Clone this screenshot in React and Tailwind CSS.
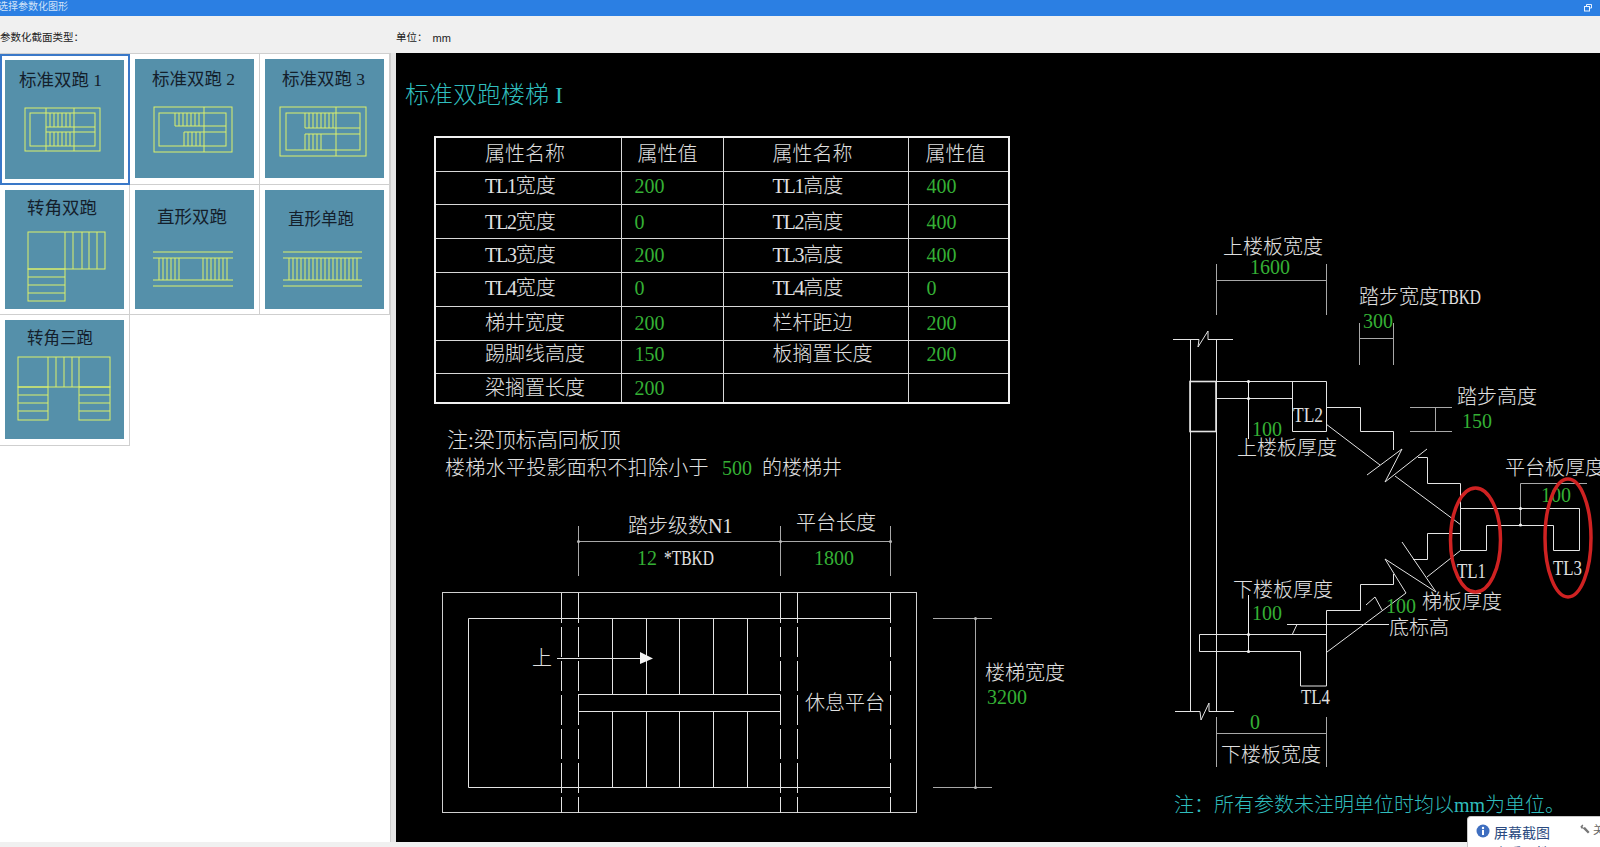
const cad = { fontFamily: '"Liberation Serif", "Noto Sans CJK SC", serif' };
const ui = { fontFamily: '"Liberation Sans", "Noto Sans CJK SC", sans-serif' };

const WHITE = "#e0e0e0";
const GREEN = "#35b035";
const CYAN = "#2fbdbd";
const YELLOW = "#dcf06a";

// evenly spaced stair treads inside a thumbnail
function Treads({ from, to, step, y1, y2 }) {
  const xs = [];
  for (let x = from; x <= to; x += step) xs.push(x);
  return xs.map((x) => <line key={x} x1={x} x2={x} y1={y1} y2={y2} />);
}

function Rungs({ x1, x2, ys }) {
  return ys.map((y) => <line key={y} x1={x1} x2={x2} y1={y} y2={y} />);
}

function Ladder({ xs, y1, y2 }) {
  return xs.map((x) => <line key={x} x1={x} x2={x} y1={y1} y2={y2} />);
}

const thumbs = [
  {
    title: "标准双跑 1", x: 14, y: 26, selected: true,
    art: (
      <>
        <rect x="20" y="48" width="75" height="43" />
        <rect x="25" y="53" width="65" height="33" />
        <Ladder xs={[41, 69]} y1={48} y2={91} />
        <Rungs x1={41} x2={90} ys={[67, 72]} />
        <Treads from={45} to={65} step={4} y1={53} y2={67} />
        <Treads from={45} to={65} step={4} y1={72} y2={86} />
      </>
    ),
  },
  {
    title: "标准双跑 2", x: 17, y: 26,
    art: (
      <>
        <rect x="19" y="48" width="78" height="45" />
        <rect x="24" y="54" width="67" height="33" />
        <line x1="69" x2="69" y1="48" y2="93" />
        <path d="M40 54V67H91M49 87V73H91" />
        <Treads from={44} to={65} step={4} y1={54} y2={67} />
        <Treads from={53} to={65} step={4} y1={73} y2={87} />
      </>
    ),
  },
  {
    title: "标准双跑 3", x: 17, y: 26,
    art: (
      <>
        <rect x="15" y="48" width="86" height="49" />
        <rect x="21" y="54" width="74" height="37" />
        <line x1="71" x2="71" y1="48" y2="97" />
        <path d="M40 54V69H95M40 91V75H95" />
        <Treads from={44} to={68} step={4} y1={54} y2={69} />
        <Treads from={44} to={59} step={4} y1={75} y2={91} />
      </>
    ),
  },
  {
    title: "转角双跑", x: 22, y: 24,
    art: (
      <>
        <rect x="23" y="42" width="77" height="37" />
        <rect x="23" y="79" width="37" height="32" />
        <Ladder xs={[60, 68, 77, 84, 92]} y1={42} y2={79} />
        <Rungs x1={23} x2={60} ys={[87, 95, 103]} />
      </>
    ),
  },
  {
    title: "直形双跑", x: 22, y: 33,
    art: (
      <>
        <Rungs x1={18} x2={98} ys={[62, 68, 90, 96]} />
        <Treads from={24} to={47} step={4} y1={68} y2={90} />
        <Treads from={68} to={93} step={4} y1={68} y2={90} />
      </>
    ),
  },
  {
    title: "直形单跑", x: 23, y: 35, size: 16.5,
    art: (
      <>
        <Rungs x1={18} x2={97} ys={[62, 68, 90, 96]} />
        <Treads from={24} to={92} step={4} y1={68} y2={90} />
      </>
    ),
  },
  {
    title: "转角三跑", x: 22, y: 24, size: 16.5,
    art: (
      <>
        <rect x="13" y="37" width="92" height="30" />
        <rect x="13" y="67" width="30" height="33" />
        <rect x="74" y="67" width="31" height="33" />
        <Ladder xs={[43, 51, 59, 67, 74]} y1={37} y2={67} />
        <Rungs x1={13} x2={43} ys={[75, 83, 91]} />
        <Rungs x1={74} x2={105} ys={[75, 83, 91]} />
      </>
    ),
  },
];

function Thumb({ item }) {
  return (
    <div className={item.selected ? "flex items-center justify-start border-2 border-[#3a78c8] pl-[3px]" : "flex items-center justify-center border-r border-b border-[#cfcfcf]"}>
      <svg viewBox="0 0 119 119" className="h-[119px] w-[119px] bg-[#5590aa]">
        <text x={item.x} y={item.y} fontSize={item.size || 17.5} fill="#14202c" style={cad}>{item.title}</text>
        <g fill="none" stroke={YELLOW} strokeWidth="1">{item.art}</g>
      </svg>
    </div>
  );
}

// last entry nudges the row's text, the labels don't sit centred in the drawing
const rows = [
  ["h-[34px]", "属性名称", "属性值", "属性名称", "属性值", ""],
  ["h-[33px]", "TL1|宽度", "200", "TL1|高度", "400", "pb-[4px]"],
  ["h-[34px]", "TL2|宽度", "0", "TL2|高度", "400", "pt-[2px]"],
  ["h-[34px]", "TL3|宽度", "200", "TL3|高度", "400", ""],
  ["h-[34px]", "TL4|宽度", "0", "TL4|高度", "0", "pb-[2px]"],
  ["h-[34px]", "梯井宽度", "200", "栏杆距边", "200", "pb-[1px]"],
  ["h-[33px]", "踢脚线高度", "150", "板搁置长度", "200", "pb-[5px]"],
  ["h-[30px]", "梁搁置长度", "200", "", "", ""],
];

// TL labels are drawn narrower than the chinese that follows them
function Name({ text }) {
  const [a, b] = text.split("|");
  if (!b) return text;
  return (
    <>
      <span className="tracking-[-1.2px]">{a}</span>
      {b}
    </>
  );
}

function ParamTable() {
  return (
    <table className="ml-[38px] mt-[25px] w-[574px] table-fixed border-collapse border-2 border-[#f0f0f0] text-[20px] leading-none text-[#e0e0e0]">
      <colgroup>
        <col className="w-[186px]" />
        <col className="w-[102px]" />
        <col className="w-[185px]" />
        <col className="w-[101px]" />
      </colgroup>
      <tbody>
        {rows.map((r, i) => {
          const head = i === 0;
          return (
            <tr key={i} className={r[0]}>
              <td className={`border border-[#d8d8d8] pl-[49px] ${r[5]}`}><Name text={r[1]} /></td>
              <td className={`${head ? "border border-[#d8d8d8] pl-[16px]" : "border border-[#d8d8d8] pl-[13px] text-[#35b035]"} ${r[5]}`}>{r[2]}</td>
              <td className={`border border-[#d8d8d8] pl-[49px] ${r[5]}`}><Name text={r[3]} /></td>
              <td className={`${head ? "border border-[#d8d8d8] pl-[17px]" : "border border-[#d8d8d8] pl-[18px] text-[#35b035]"} ${r[5]}`}>{r[4]}</td>
            </tr>
          );
        })}
      </tbody>
    </table>
  );
}

function T({ x, y, c = WHITE, size = 20, len, children }) {
  return (
    <text x={x} y={y} fontSize={size} fill={c} style={cad} dominantBaseline="central" textLength={len} lengthAdjust={len ? "spacingAndGlyphs" : undefined}>
      {children}
    </text>
  );
}

function PlanDrawing() {
  return (
    <svg viewBox="396 500 704 330" className="mt-[19px] h-[330px] w-[704px]">
      <g fill="none" stroke="#e4e4e4" strokeWidth="1">
        <rect x="442.5" y="592.5" width="474" height="220" stroke="#cfcfcf" />
        <path d="M890.5 618.5H468.5V787.5H890.5" />
        <path d="M578 694.5H780.5M578 711.5H780.5" />
        <path d="M612.5 618V694M646.5 618V694M679.5 618V694M713.5 618V694M747.5 618V694" />
        <path d="M612.5 711V787M646.5 711V787M679.5 711V787M713.5 711V787M747.5 711V787" />
        <path d="M561.5 593V813M578.5 593V813M780.5 593V813M797.5 593V813M890.5 593V813" strokeDasharray="30 4" />
        <path d="M557 658.5H642" />
      </g>
      <path d="M640 652L653 658.5L640 664Z" fill="#f2f2f2" />
      <g fill="none" stroke="#a8a8a8" strokeWidth="1">
        <path d="M578.5 526V576M780.5 526V576M890.5 526V576M578 541.5H891" />
        <path d="M933 618.5H992M933 787.5H992M975.5 618V787" />
      </g>
      <g fill="#b8b8b8">
        <circle cx="578.5" cy="541.5" r="1.5" />
        <circle cx="780.5" cy="541.5" r="1.5" />
        <circle cx="890.5" cy="541.5" r="1.5" />
        <circle cx="975.5" cy="618.5" r="1.5" />
        <circle cx="975.5" cy="787.5" r="1.5" />
      </g>
      <T x={628} y={526}>踏步级数N1</T>
      <T x={796} y={523}>平台长度</T>
      <T x={637} y={558} c={GREEN}>12</T>
      <T x={664} y={558} len={50}>*TBKD</T>
      <T x={814} y={558} c={GREEN}>1800</T>
      <T x={532} y={658}>上</T>
      <T x={805} y={703}>休息平台</T>
      <T x={985} y={673}>楼梯宽度</T>
      <T x={987} y={697} c={GREEN}>3200</T>
    </svg>
  );
}

function SectionDrawing() {
  return (
    <svg viewBox="1100 220 500 600" className="mt-[167px] h-[600px] w-[500px]">
      <g fill="none" stroke="#e4e4e4" strokeWidth="1">
        <path d="M1173 339.5H1199L1198 347L1208 331V339.5H1233" />
        <path d="M1175 711.5H1200L1201 720L1209 703V711.5H1234" />
        <path d="M1190.5 339V711M1216.5 339V711" />
        <rect x="1190" y="381.5" width="26" height="50" strokeWidth="1.6" />
        <path d="M1216 381.5H1326.5V407.5H1360.5V431.5H1393.5V450" />
        <path d="M1216 398.5H1292.5M1292.5 381V431.5H1326.5V407" />
        <path d="M1326 424L1380 465M1367 475L1402 449L1385 482L1427 449M1418 457.5H1427.5V483.5H1460.5V525" />
        <path d="M1395 476L1461 525" />
        <path d="M1460.5 508.5H1579.5V550.5H1553.5V525.5H1486.5V550.5H1460.5V508.5" />
        <path d="M1460.5 533.5H1427.5V559.5H1413M1460.5 550.5L1427 577" />
        <path d="M1402 542L1436 592L1385 559L1406 593L1327 652" />
        <path d="M1393.5 574V584.5H1360.5V610.5H1326.5V686H1300.5V651.5H1199.5V634.5H1326" />
        <path d="M1287 624.5H1389M1297 624.5L1292 635" />
        <path d="M1366 605L1375 597L1382 610" />
      </g>
      <g fill="none" stroke="#a8a8a8" strokeWidth="1">
        <path d="M1216.5 264V315M1326.5 264V315M1216 280.5H1327" />
        <path d="M1359.5 323V365M1393.5 323V365M1359 338.5H1394" />
        <path d="M1410 407.5H1452M1410 431.5H1452M1435.5 407V432" />
        <path d="M1216.5 717V767M1326.5 717V767M1216 733.5H1327" />
        <path d="M1520.5 525V483.5H1587" />
      </g>
      <path d="M1248.5 381V439M1248.5 595V652" fill="none" stroke="#f0f0f0" strokeWidth="1" />
      <g fill="#f0f0f0">
        <circle cx="1248.5" cy="381.5" r="1.6" />
        <circle cx="1248.5" cy="398.5" r="1.6" />
        <circle cx="1248.5" cy="634.5" r="1.6" />
        <circle cx="1248.5" cy="651.5" r="1.6" />
        <circle cx="1520.5" cy="508.5" r="1.6" />
        <circle cx="1520.5" cy="525" r="1.6" />
      </g>
      <T x={1223} y={247}>上楼板宽度</T>
      <T x={1250} y={267} c={GREEN}>1600</T>
      <T x={1359} y={297}>踏步宽度</T>
      <T x={1439} y={297} len={42}>TBKD</T>
      <T x={1363} y={321} c={GREEN}>300</T>
      <T x={1252} y={429} c={GREEN}>100</T>
      <T x={1237} y={448}>上楼板厚度</T>
      <T x={1293} y={415} len={30}>TL2</T>
      <T x={1457} y={397}>踏步高度</T>
      <T x={1462} y={421} c={GREEN}>150</T>
      <T x={1505} y={468}>平台板厚度</T>
      <T x={1541} y={495} c={GREEN}>100</T>
      <T x={1233} y={590}>下楼板厚度</T>
      <T x={1252} y={613} c={GREEN}>100</T>
      <T x={1386} y={606} c={GREEN}>100</T>
      <T x={1422} y={602}>梯板厚度</T>
      <T x={1389} y={628}>底标高</T>
      <T x={1457} y={571} len={29}>TL1</T>
      <T x={1553} y={568} len={29}>TL3</T>
      <T x={1301} y={697} len={29}>TL4</T>
      <T x={1250} y={722} c={GREEN}>0</T>
      <T x={1221} y={755}>下楼板宽度</T>
      <T x={1174} y={805} c={CYAN}>注：所有参数未注明单位时均以mm为单位。</T>
      <ellipse cx="1475.5" cy="540" rx="25" ry="52" fill="none" stroke="#cf2222" strokeWidth="3.5" />
      <ellipse cx="1568" cy="538" rx="23" ry="59" fill="none" stroke="#cf2222" strokeWidth="3.5" />
    </svg>
  );
}

export default function App() {
  return (
    <div className="relative flex h-screen w-full flex-col overflow-hidden bg-[#f0f0f0]" style={ui}>
      <div className="flex h-4 shrink-0 items-center justify-between bg-[#2b7fe3] pr-2 text-[10px] leading-none text-[#cfe2f8]">
        <span className="-mt-[3px] -ml-[2px]">选择参数化图形</span>
        <svg viewBox="0 0 8 8" className="h-2 w-2" fill="none" stroke="#e8f2ff" strokeWidth="1">
          <path d="M2.5 2V.5H7.5V4H6" />
          <rect x="0.5" y="2.5" width="5" height="4.5" />
        </svg>
      </div>

      <div className="flex h-[37px] shrink-0 items-center pt-[7px] text-[10.5px] text-[#222]">
        <span className="w-[396px]">参数化截面类型：</span>
        <span>单位：</span>
        <span className="ml-[5px] text-[11px]">mm</span>
      </div>

      <div className="flex min-h-0 flex-1">
        <div className="w-[391px] shrink-0 border-r border-[#cfcfcf] bg-white">
          <div className="grid grid-cols-3 auto-rows-[130.5px] border-t border-[#cfcfcf]">
            {thumbs.map((t) => <Thumb key={t.title} item={t} />)}
          </div>
        </div>
        <div className="w-[5px] shrink-0 bg-[#e6e6e6]" />

        <div className="flex min-w-0 flex-1 bg-black font-light" style={cad}>
          <div className="w-[704px] shrink-0 pt-[26px]">
            <div className="ml-[9px] h-8 text-[24px] leading-8 text-[#2fbdbd]">标准双跑楼梯 I</div>
            <ParamTable />
            <div className="ml-[51px] mt-[23px] h-[28px] text-[21px] leading-[26px] text-[#e0e0e0]">注:梁顶标高同板顶</div>
            <div className="ml-[49px] flex h-[26px] text-[20px] leading-[26px] text-[#e0e0e0]">
              <span className="tracking-[0.3px]">楼梯水平投影面积不扣除小于</span>
              <span className="ml-[13px] text-[#35b035]">500</span>
              <span className="ml-[10px]">的楼梯井</span>
            </div>
            <PlanDrawing />
          </div>
          <SectionDrawing />
        </div>
      </div>

      <div className="h-[5px] shrink-0 bg-[#f0f0f0]" />

      <div className="absolute bottom-0 right-0 flex h-[31px] w-[133px] items-start overflow-hidden rounded-tl border-l border-t border-[#c8c8c8] bg-white pl-[8px] pt-[6px]">
        <svg viewBox="0 0 14 14" className="mt-[1px] h-[14px] w-[14px] shrink-0">
          <circle cx="7" cy="7" r="6.5" fill="#3f6fc0" />
          <circle cx="7" cy="4" r="1.2" fill="#fff" />
          <rect x="6" y="6" width="2" height="5" fill="#fff" />
        </svg>
        <div className="ml-[4px] shrink-0 text-[14px] leading-[20px] text-[#2a4a80]">
          屏幕截图
          <div className="text-[#2a4a80]">查看属性</div>
        </div>
        <svg viewBox="0 0 12 12" className="ml-[30px] mt-[1px] h-[10px] w-[10px] shrink-0" fill="#777">
          <path d="M.5 3L3 .5L4 1.5L3 3.5L4 4.5L6 3.5L11.5 9.5L9.5 11.5L3.5 5.5L1.5 5.5Z" />
        </svg>
        <span className="ml-[3px] shrink-0 text-[11px] leading-[14px] text-[#666]">关</span>
      </div>
    </div>
  );
}
